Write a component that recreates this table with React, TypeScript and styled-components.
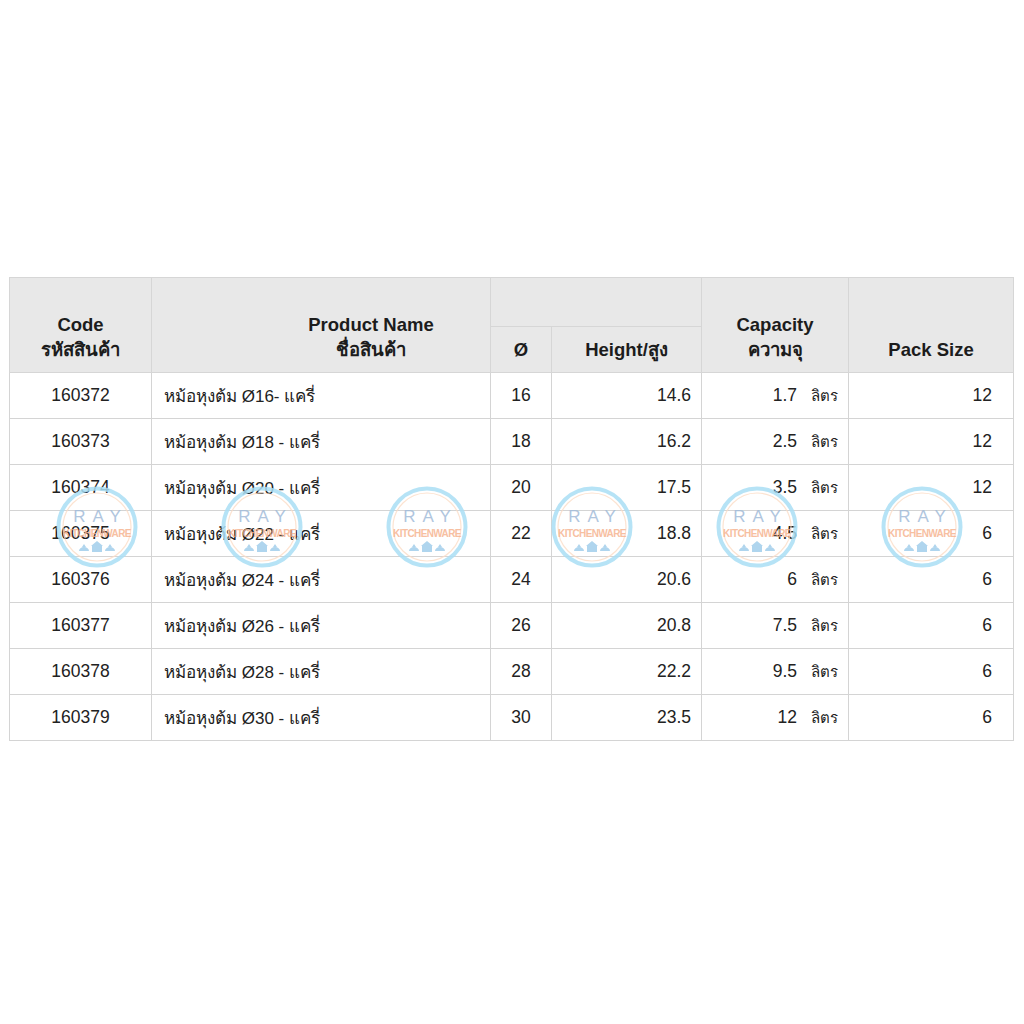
import styled, { createGlobalStyle } from "styled-components";

const GlobalStyle = createGlobalStyle`
  html, body {
    margin: 0;
    background: #ffffff;
  }
  body {
    font-family: "Liberation Sans", Arial, "Noto Sans", "DejaVu Sans", sans-serif;
    color: #1e1e1e;
  }
`;

const Page = styled.div`
  width: 1024px;
  height: 1024px;
  padding: 277px 0 0 9px;
  box-sizing: border-box;
`;

const TableWrap = styled.div`
  position: relative;
  width: 1004px;
`;

const Table = styled.table`
  width: 1004px;
  border-collapse: collapse;
  table-layout: fixed;
  border: 1px solid #c4c4c4;
`;

const HeadCell = styled.th<{ $padLeft?: number }>`
  background: #e8e8e8;
  border: 1px solid #d6d6d6;
  font-size: 18.5px;
  font-weight: bold;
  line-height: 25px;
  vertical-align: bottom;
  text-align: center;
  padding: 0 0 10px ${(p) => p.$padLeft ?? 0}px;
  color: #1c1c1c;
`;

const GroupCell = styled(HeadCell)`
  height: 48px;
  padding: 0;
`;

const SubCell = styled(HeadCell)`
  height: 35px;
`;

const Cell = styled.td<{ $align?: "left" | "center" | "right"; $padRight?: number }>`
  height: 45px;
  border: 1px solid #d4d4d4;
  font-size: 17.5px;
  text-align: ${(p) => p.$align ?? "center"};
  padding: 0 ${(p) => p.$padRight ?? 0}px 0 ${(p) => (p.$align === "left" ? 12 : 0)}px;
  vertical-align: middle;
  color: #222222;
`;

const NameText = styled.span`
  font-size: 17px;
`;

const Unit = styled.span`
  display: inline-block;
  margin-left: 14px;
  font-size: 15px;
`;

const Overlay = styled.div`
  position: absolute;
  left: 47px;
  top: 209px;
  display: flex;
  gap: 83px;
  pointer-events: none;
`;

const Mark = styled.svg`
  width: 82px;
  height: 82px;
  display: block;
`;

const Watermark = () => (
  <Mark viewBox="-41 -41 82 82">
    <circle r="38.5" fill="none" stroke="#a9def5" strokeWidth="4" opacity="0.85" />
    <circle r="34" fill="none" stroke="#fbdcc6" strokeWidth="1.2" opacity="0.8" />
    <text
      y="-5"
      textAnchor="middle"
      fontSize="17"
      letterSpacing="7"
      fill="#a3bcd9"
      fontFamily="Liberation Sans, sans-serif"
      opacity="0.85"
      dx="3.5"
    >
      RAY
    </text>
    <text
      y="10"
      textAnchor="middle"
      fontSize="10"
      fontWeight="bold"
      fill="#f6b08a"
      fontFamily="Liberation Sans, sans-serif"
      letterSpacing="-0.6"
      opacity="0.8"
    >
      KITCHENWARE
    </text>
    <g fill="#9ccbea" opacity="0.8">
      <path d="M-18 24 a5 4 0 0 1 10 0 Z M-15 20 L-13 17 L-11 20 Z" />
      <path d="M-6 19 L0 14 L6 19 Z M-5 19 h10 v6 h-10 Z" />
      <path d="M8 24 a5 4 0 0 1 10 0 Z M11 20 L13 17 L15 20 Z" />
    </g>
  </Mark>
);

type Row = {
  code: string;
  size: string;
  dia: string;
  height: string;
  cap: string;
  pack: string;
};

const rows: Row[] = [
  { code: "160372", size: "Ø16- แครี่", dia: "16", height: "14.6", cap: "1.7", pack: "12" },
  { code: "160373", size: "Ø18 - แครี่", dia: "18", height: "16.2", cap: "2.5", pack: "12" },
  { code: "160374", size: "Ø20 - แครี่", dia: "20", height: "17.5", cap: "3.5", pack: "12" },
  { code: "160375", size: "Ø22 - แครี่", dia: "22", height: "18.8", cap: "4.5", pack: "6" },
  { code: "160376", size: "Ø24 - แครี่", dia: "24", height: "20.6", cap: "6", pack: "6" },
  { code: "160377", size: "Ø26 - แครี่", dia: "26", height: "20.8", cap: "7.5", pack: "6" },
  { code: "160378", size: "Ø28 - แครี่", dia: "28", height: "22.2", cap: "9.5", pack: "6" },
  { code: "160379", size: "Ø30 - แครี่", dia: "30", height: "23.5", cap: "12", pack: "6" },
];

export default function App() {
  return (
    <>
      <GlobalStyle />
      <Page>
        <TableWrap>
          <Table>
            <colgroup>
              <col style={{ width: 142 }} />
              <col style={{ width: 339 }} />
              <col style={{ width: 61 }} />
              <col style={{ width: 150 }} />
              <col style={{ width: 147 }} />
              <col style={{ width: 165 }} />
            </colgroup>
            <thead>
              <tr>
                <HeadCell rowSpan={2}>
                  Code
                  <br />
                  รหัสสินค้า
                </HeadCell>
                <HeadCell rowSpan={2} $padLeft={100}>
                  Product Name
                  <br />
                  ชื่อสินค้า
                </HeadCell>
                <GroupCell colSpan={2} />
                <HeadCell rowSpan={2}>
                  Capacity
                  <br />
                  ความจุ
                </HeadCell>
                <HeadCell rowSpan={2}>Pack Size</HeadCell>
              </tr>
              <tr>
                <SubCell>Ø</SubCell>
                <SubCell>Height/สูง</SubCell>
              </tr>
            </thead>
            <tbody>
              {rows.map((r) => (
                <tr key={r.code}>
                  <Cell>{r.code}</Cell>
                  <Cell $align="left">
                    <NameText>หม้อหุงต้ม {r.size}</NameText>
                  </Cell>
                  <Cell>{r.dia}</Cell>
                  <Cell $align="right" $padRight={10}>
                    {r.height}
                  </Cell>
                  <Cell $align="right" $padRight={10}>
                    {r.cap}
                    <Unit>ลิตร</Unit>
                  </Cell>
                  <Cell $align="right" $padRight={21}>
                    {r.pack}
                  </Cell>
                </tr>
              ))}
            </tbody>
          </Table>
          <Overlay>
            {Array.from({ length: 6 }).map((_, i) => (
              <Watermark key={i} />
            ))}
          </Overlay>
        </TableWrap>
      </Page>
    </>
  );
}
